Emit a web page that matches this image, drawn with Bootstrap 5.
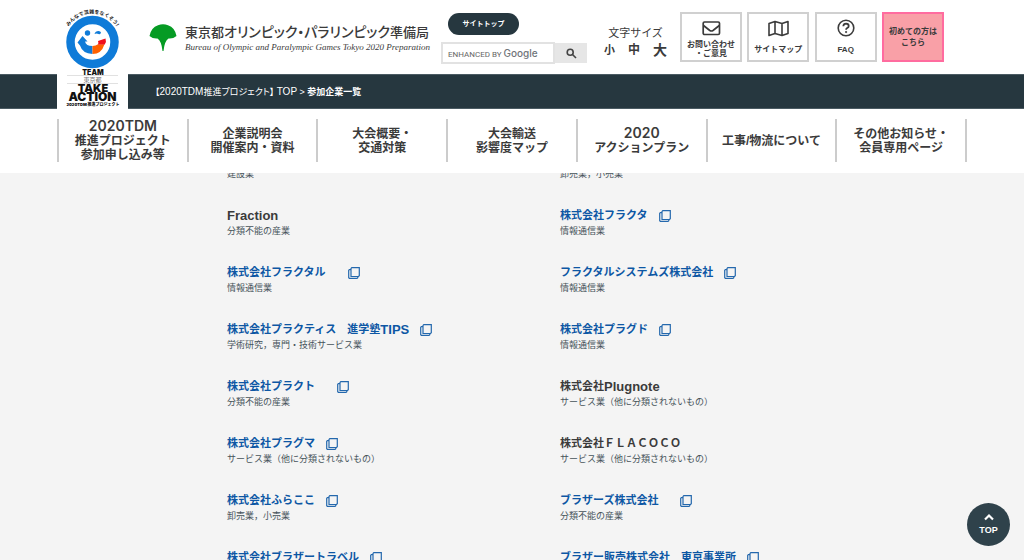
<!DOCTYPE html>
<html lang="ja">
<head>
<meta charset="utf-8">
<meta name="viewport" content="width=device-width, initial-scale=1">
<title>参加企業一覧</title>
<link href="https://cdn.jsdelivr.net/npm/bootstrap@5.3.0/dist/css/bootstrap.min.css" rel="stylesheet">
<style>
:root { --ink: #3b3b3b; --navy: #26373f; --blue: #0d57a4; }
body { font-family: "Liberation Sans", "Noto Sans CJK JP", sans-serif; color: var(--ink); background: #f4f4f4; font-size: 11px; }
.wrap { width: 100%; max-width: 910px; margin: 0 auto; }
.masthead { height: 74px; padding: 12px 23px 0 92px; }
.badge-logo { left: 0; top: 0; width: 71px; height: 109px; background: #fff; z-index: 2; }
.org-name { font-family: "Noto Sans CJK JP", sans-serif; font-size: 13px; line-height: 16px; font-weight: 500; font-feature-settings: "palt"; }
.org-name .kana { font-size: 14px; }
.org-en { font: italic 9px/14px "Liberation Serif", serif; }
.ginkgo { margin-top: 12px; }
.org-text { margin-top: 11px; width: 242px; }
.find { width: 146px; margin-left: 14px; }
.pill { background: var(--navy); color: #fff; font-size: 7px; line-height: 10px; font-weight: 700; width: 71px; height: 22px; margin: 1px 0 7px 7px; }
.find-box { width: 114px; height: 22px; border: 2px solid #e2e2e2; background: #fff; padding: 0 4px; }
.find-mark { left: 7px; top: 0; line-height: 22px; font-size: 8px; color: #666; font-family: Roboto, sans-serif; pointer-events: none; }
.find-mark span { font-family: Inter, sans-serif; font-size: 10px; margin-left: 2px; font-weight: 500; color: #70757a; }
.find-go { width: 32px; height: 20px; margin-top: 1px; background: #e6e6e6; border: 0; padding: 0; }
.sizes { width: 63px; margin: 13px 13px 0 17px; line-height: 17px; }
.sizes button { border: 0; background: none; padding: 0; color: var(--ink); font-weight: 700; }
.sz-s { font-size: 11px; } .sz-m { font-size: 12px; } .sz-l { font-size: 14px; }
.tile { width: 62px; height: 50px; border: 2px solid #d0d0d0; color: var(--ink); font-size: 8px; line-height: 9px; font-weight: 700; text-decoration: none; text-align: center; padding-bottom: 6px; }
.tile svg { display: block; margin: 0 auto; }
.tile-mail { padding-bottom: 2px; }
.tile-pink { background: #f9a0a7; border-color: #ff6c9f; line-height: 11px; padding: 0; }
.crumbs { background: var(--navy); border-bottom: 1px solid #4b5b63; border-top: 1px solid #4b5b63; height: 35px; color: #fff; font-size: 9px; }
.crumbs .wrap { padding-left: 98px; line-height: 33px; font-feature-settings: "palt"; }
.crumbs a { color: #fff; text-decoration: none; }
.crumbs .en { font-size: 10px; }
.menu { height: 64px; padding-top: 10px; }
.menu a { height: 43px; border-right: 2px solid #ccc; color: var(--ink); font-size: 12px; line-height: 14px; font-weight: 700; text-decoration: none; text-align: center; flex: 1 1 0; }
.menu a:first-child { border-left: 2px solid #ccc; }
.menu .en { font-size: 14px; font-family: Inter, sans-serif; font-weight: 600; }
.firms { grid-template-columns: 1fr 1fr; row-gap: 26px; padding: 0 74px 0 170px; margin-top: -6px; }
.firm-name, .firm-name a { display: flex; align-items: center; }
.firm-name { font-size: 11px; height: 17px; line-height: 17px; font-weight: 700; margin: 0; white-space: nowrap; }
.firm-name .en { font-size: 13px; }
.firm-name a { color: var(--blue); text-decoration: none; }
.firm-name svg { margin-left: 11px; }
.firm-kind { font-size: 9px; line-height: 14px; margin: 0; color: #46535a; }
.to-top { position: fixed; right: 14px; bottom: 14px; width: 43px; height: 43px; background: #2f424b; color: #fff; font-size: 9px; font-weight: 700; line-height: 11px; text-decoration: none; }
</style>
</head>
<body class="d-flex flex-column vh-100 overflow-hidden">
<svg width="0" height="0" class="position-absolute" aria-hidden="true">
  <symbol id="ext" viewBox="0 0 12 12"><path d="M3.800.7h7.500v8l-.8.8H3v-8zM2.600 2.600H1.400l-.7.600v7.500l.7.700h7.600l.8-.7V9.600" fill="none" stroke="#2468ad" stroke-width="1.200"/></symbol>
</svg>
<header class="flex-shrink-0 bg-white">
  <div class="wrap position-relative">
    <a href="#" class="badge-logo position-absolute" aria-label="TEAM 東京都 TAKE ACTION">
      <svg width="71" height="109" viewBox="57 0 71 109" text-anchor="middle" font-family="Inter, 'Noto Sans CJK JP', sans-serif">
        <path id="arc" d="M64 42a28.500 28.500 0 0 1 57 0" fill="none"/>
        <text font-size="5" font-weight="700" fill="#222"><textPath href="#arc" startOffset="50%">みんなで混雑をなくそう!</textPath></text>
        <circle cx="92.500" cy="42" r="22" fill="none" stroke="#0f7bd8" stroke-width="8.500"/>
        <circle cx="87.500" cy="33" r="2.700" fill="#0f7bd8"/>
        <path d="M94.500 34q.8-3 4-3 2 0 2.500 1.500-.5 2.500-2.500 1.500-2-.8-4 0z" fill="#0f7bd8"/>
        <path d="M77.500 42.500l5-6.500 5 5.500h-2.500q1 4.500 7.500 4.500v8q-10-.5-12.500-8.500z" fill="#0f7bd8"/>
        <path d="M92.500 46q3.500 0 5.500-1.800h6.500q-3 9.800-12 9.800z" fill="#ff6100"/>
        <path d="M98 41l7.500-2.500q1.200 3-.8 6h-6.700q.8-1.800 0-3.500z" fill="#f00f1c"/>
        <g fill="#111">
          <text x="93" y="74.500" font-size="7" font-weight="900">TEAM</text>
          <path d="M67 75.500h51M67 83.500h51" stroke="#ccc" stroke-width=".6"/>
          <text x="92.500" y="82" font-size="6" fill="#777">東京都</text>
          <text x="93" y="92" font-size="11" font-weight="900">TAKE</text>
          <text x="92.500" y="101" font-size="12" font-weight="900">ACTION</text>
          <text x="93" y="106" font-size="4" font-weight="900">2020TDM 推進プロジェクト</text>
        </g>
      </svg>
    </a>
    <div class="masthead d-flex align-items-start">
      <svg class="ginkgo flex-shrink-0" width="28" height="27" viewBox="0 0 28 27"><path d="M.5 12Q2 3.500 9 1.200Q14-.8 19 1.200Q26 3.500 27.500 12Q24 15 19.500 14.500Q15.500 17 14.500 27h-1Q12.500 17 8.500 14.500Q4 15 .5 12z" fill="#069b24"/></svg>
      <div class="org-text ms-2 flex-shrink-0 text-nowrap">
        <div class="org-name">東京都<span class="kana">オリンピック・パラリンピック</span>準備局</div>
        <div class="org-en">Bureau of Olympic and Paralympic Games Tokyo 2020 Preparation</div>
      </div>
      <form class="find flex-shrink-0">
        <button type="button" class="btn pill rounded-pill p-0 border-0 d-block">サイトトップ</button>
        <div class="d-flex position-relative">
          <input class="find-box" type="text" id="q">
          <label for="q" class="find-mark position-absolute text-nowrap">ENHANCED BY<span>Google</span></label>
          <button type="button" class="find-go d-flex align-items-center justify-content-center" aria-label="検索"><svg width="11" height="11" viewBox="0 0 11 11" fill="none" stroke="#444" stroke-width="1.600"><circle cx="4.200" cy="4.200" r="3"/><path d="M6.500 6.500l3.500 3.500"/></svg></button>
        </div>
      </form>
      <div class="sizes flex-shrink-0 text-center">
        <div>文字サイズ</div>
        <div class="d-flex justify-content-between align-items-center"><button type="button" class="sz-s">小</button><button type="button" class="sz-m">中</button><button type="button" class="sz-l">大</button></div>
      </div>
      <div class="d-flex flex-grow-1 justify-content-between">
        <a href="#" class="tile tile-mail d-flex flex-column justify-content-end"><svg width="19" height="15" viewBox="0 0 19 15" fill="none" stroke="#3b3b3b" stroke-width="1.700" class="mb-1"><rect x="1.200" y="1" width="16.300" height="12.500" rx="1.300"/><path d="M1.500 4.500l6.300 5q1.600 1 3.200 0l6.300-5"/></svg>お問い合わせ<br>・ご意見</a>
        <a href="#" class="tile d-flex flex-column justify-content-end"><svg width="21" height="17" viewBox="0 0 21 17" fill="none" stroke="#3b3b3b" stroke-width="1.600" stroke-linejoin="round" class="mb-2"><path d="M1 3.500l6-2 7 2 6-2v12l-6 2-7-2-6 2zM7 1.500v12M14 3.500v12"/></svg>サイトマップ</a>
        <a href="#" class="tile d-flex flex-column justify-content-end"><svg width="18" height="18" viewBox="0 0 18 18" fill="none" stroke="#3b3b3b" class="mb-2"><circle cx="9" cy="9" r="7.800" stroke-width="1.600"/><path d="M6.300 7.200q.2-2.600 2.800-2.600 2.600.1 2.600 2.300 0 1.300-1.500 2.100-1.100.6-1.100 1.700" stroke-width="1.800"/><circle cx="9.100" cy="13" r=".7" fill="#3b3b3b" stroke-width=".8"/></svg>FAQ</a>
        <a href="#" class="tile tile-pink d-flex flex-column justify-content-center">初めての方は<br>こちら</a>
      </div>
    </div>
  </div>
  <nav class="crumbs" aria-label="パンくず"><div class="wrap"><a href="#">【<span class="en">2020TDM</span>推進プロジェクト】 <span class="en">TOP</span></a> &gt; <strong>参加企業一覧</strong></div></nav>
  <nav class="menu wrap d-flex">
    <a href="#" class="d-flex align-items-center justify-content-center"><span><span class="en">2020TDM</span><br>推進プロジェクト<br>参加申し込み等</span></a>
    <a href="#" class="d-flex align-items-center justify-content-center">企業説明会<br>開催案内・資料</a>
    <a href="#" class="d-flex align-items-center justify-content-center">大会概要・<br>交通対策</a>
    <a href="#" class="d-flex align-items-center justify-content-center">大会輸送<br>影響度マップ</a>
    <a href="#" class="d-flex align-items-center justify-content-center"><span><span class="en">2020</span><br>アクションプラン</span></a>
    <a href="#" class="d-flex align-items-center justify-content-center">工事/物流について</a>
    <a href="#" class="d-flex align-items-center justify-content-center">その他お知らせ・<br>会員専用ページ</a>
  </nav>
</header>
<main class="flex-grow-1 overflow-hidden">
  <div class="wrap">
    <div class="firms d-grid">
      <p class="firm-kind">建設業</p>
      <p class="firm-kind">卸売業，小売業</p>
      <div><h2 class="firm-name"><span class="en">Fraction</span></h2><p class="firm-kind">分類不能の産業</p></div>
      <div><h2 class="firm-name"><a href="#">株式会社フラクタ<svg width="12" height="12"><use href="#ext"/></svg></a></h2><p class="firm-kind">情報通信業</p></div>
      <div><h2 class="firm-name"><a href="#">株式会社フラクタル　<svg width="12" height="12"><use href="#ext"/></svg></a></h2><p class="firm-kind">情報通信業</p></div>
      <div><h2 class="firm-name"><a href="#">フラクタルシステムズ株式会社<svg width="12" height="12"><use href="#ext"/></svg></a></h2><p class="firm-kind">情報通信業</p></div>
      <div><h2 class="firm-name"><a href="#">株式会社プラクティス　進学塾<span class="en">TIPS</span><svg width="12" height="12"><use href="#ext"/></svg></a></h2><p class="firm-kind">学術研究，専門・技術サービス業</p></div>
      <div><h2 class="firm-name"><a href="#">株式会社プラグド<svg width="12" height="12"><use href="#ext"/></svg></a></h2><p class="firm-kind">情報通信業</p></div>
      <div><h2 class="firm-name"><a href="#">株式会社プラクト　<svg width="12" height="12"><use href="#ext"/></svg></a></h2><p class="firm-kind">分類不能の産業</p></div>
      <div><h2 class="firm-name">株式会社<span class="en">Plugnote</span></h2><p class="firm-kind">サービス業（他に分類されないもの）</p></div>
      <div><h2 class="firm-name"><a href="#">株式会社プラグマ<svg width="12" height="12"><use href="#ext"/></svg></a></h2><p class="firm-kind">サービス業（他に分類されないもの）</p></div>
      <div><h2 class="firm-name">株式会社ＦＬＡＣＯＣＯ</h2><p class="firm-kind">サービス業（他に分類されないもの）</p></div>
      <div><h2 class="firm-name"><a href="#">株式会社ふらここ<svg width="12" height="12"><use href="#ext"/></svg></a></h2><p class="firm-kind">卸売業，小売業</p></div>
      <div><h2 class="firm-name"><a href="#">ブラザーズ株式会社　<svg width="12" height="12"><use href="#ext"/></svg></a></h2><p class="firm-kind">分類不能の産業</p></div>
      <div><h2 class="firm-name"><a href="#">株式会社ブラザートラベル<svg width="12" height="12"><use href="#ext"/></svg></a></h2></div>
      <div><h2 class="firm-name"><a href="#">ブラザー販売株式会社　東京事業所<svg width="12" height="12"><use href="#ext"/></svg></a></h2></div>
    </div>
  </div>
</main>
<a href="#" class="to-top rounded-circle d-flex flex-column align-items-center justify-content-center"><svg width="10" height="8" viewBox="0 0 10 8" fill="none" stroke="#fff" stroke-width="2.200" class="mb-1"><path d="M1 6.500l4-4 4 4"/></svg>TOP</a>
<script src="https://cdn.jsdelivr.net/npm/bootstrap@5.3.0/dist/js/bootstrap.bundle.min.js"></script>
</body>
</html>
